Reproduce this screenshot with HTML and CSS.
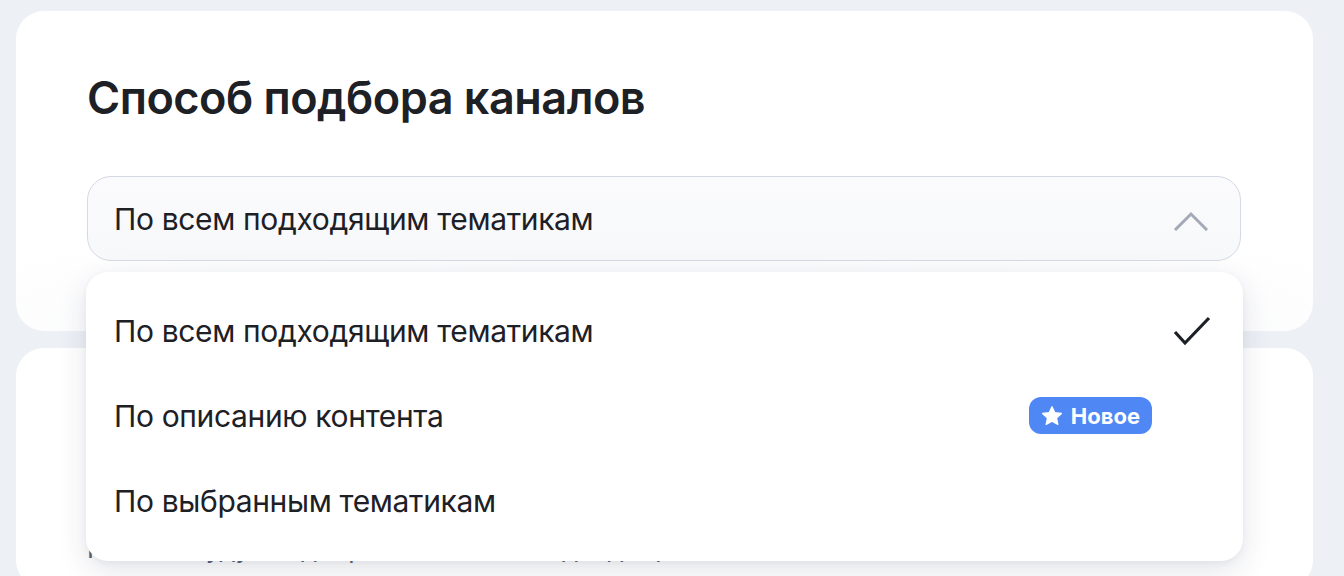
FILE: index.html
```html
<!DOCTYPE html>
<html lang="ru">
<head>
<meta charset="utf-8">
<link rel="stylesheet" href="styles.css">
</head>
<body>
<div class="page">
  <section class="card card-top">
    <h1 class="title">Способ подбора каналов</h1>
    <div class="select-wrap">
      <div class="select">
        <span class="select-text">По всем подходящим тематикам</span>
        <svg class="chevron" width="34" height="20" viewBox="0 0 34 20"><path d="M2 18 L17 3 L32 18" fill="none" stroke="#a3a9b6" stroke-width="3" stroke-linecap="square"/></svg>
      </div>
      <div class="menu">
        <div class="item">
          <span class="item-text">По всем подходящим тематикам</span>
          <span class="check-slot"><svg width="38" height="32" viewBox="0 0 38 32"><path d="M2 17 L12 28 L36 3" fill="none" stroke="#1d2025" stroke-width="3.2"/></svg></span>
        </div>
        <div class="item">
          <span class="item-text">По описанию контента</span>
          <span class="badge"><svg class="star" width="22" height="22" viewBox="0 0 24 24"><path d="M12 1.8 L15.1 8.4 L22.3 9.2 L16.9 14.1 L18.4 21.2 L12 17.6 L5.6 21.2 L7.1 14.1 L1.7 9.2 L8.9 8.4 Z" fill="#fff" stroke="#fff" stroke-width="1.4" stroke-linejoin="round"/></svg>Новое</span>
          <span class="check-slot"></span>
        </div>
        <div class="item">
          <span class="item-text">По выбранным тематикам</span>
          <span class="check-slot"></span>
        </div>
      </div>
    </div>
  </section>
  <section class="card card-bottom">
    <p class="hint">Каналы будут подобраны по всем подходящим тематикам</p>
  </section>
</div>
</body>
</html>
```

FILE: styles.css
```css
* { box-sizing: border-box; }
html, body { margin: 0; height: 100%; }
body {
  background: #edf0f5;
  font-family: Inter, "Noto Sans", "Liberation Sans", sans-serif;
  color: #1d2025;
  overflow: hidden;
}
.page {
  display: flex;
  flex-direction: column;
  gap: 17px;
  padding: 11px 31px 0 16px;
}
.card {
  background: #ffffff;
  border-radius: 28px;
}
.card-top {
  height: 320px;
  padding: 59px 72px 0 71px;
  background: radial-gradient(ellipse 90% 60% at 50% 100%, #f6f7fa 0%, #ffffff 70%);
  position: relative;
  z-index: 2;
}
.title {
  margin: 0;
  font-size: 45px;
  line-height: 56px;
  font-weight: 600;
  letter-spacing: -0.5px;
}
.select-wrap {
  position: relative;
  margin-top: 50px;
}
.select {
  height: 85px;
  border: 1.5px solid #d5d9e3;
  border-radius: 24px;
  background: linear-gradient(180deg, #fbfbfd 0%, #f7f8fa 100%);
  display: flex;
  align-items: center;
  padding: 0 32px 0 26px;
}
.select-text {
  flex: 1;
  font-size: 30px;
  letter-spacing: -0.35px;
}
.chevron { display: block; margin-top: 4px; }
.menu {
  position: absolute;
  top: calc(100% + 11px);
  left: -1px;
  right: -2px;
  background: #fff;
  border-radius: 22px;
  padding: 16px 32px 18px 28px;
  box-shadow: 0 10px 30px rgba(30, 40, 70, 0.12), 0 2px 6px rgba(30, 40, 70, 0.05);
}
.item {
  height: 85px;
  display: flex;
  align-items: center;
  gap: 21px;
}
.item-text {
  flex: 1;
  font-size: 30px;
  letter-spacing: -0.35px;
}
.check-slot {
  width: 38px;
  display: flex;
  align-items: center;
}
.check-slot svg { display: block; }
.badge {
  display: inline-flex;
  align-items: center;
  gap: 8px;
  height: 37px;
  padding: 0 12px 0 12px;
  background: #4f87f5;
  color: #fff;
  border-radius: 12px;
  font-size: 22px;
  font-weight: 700;
}
.star { display: block; }
.card-bottom {
  height: 240px;
  padding: 185px 71px 0 71px;
  position: relative;
  z-index: 1;
}
.hint {
  margin: 0;
  font-size: 26px;
  line-height: 32px;
  white-space: nowrap;
  color: #5b6274;
}
```
